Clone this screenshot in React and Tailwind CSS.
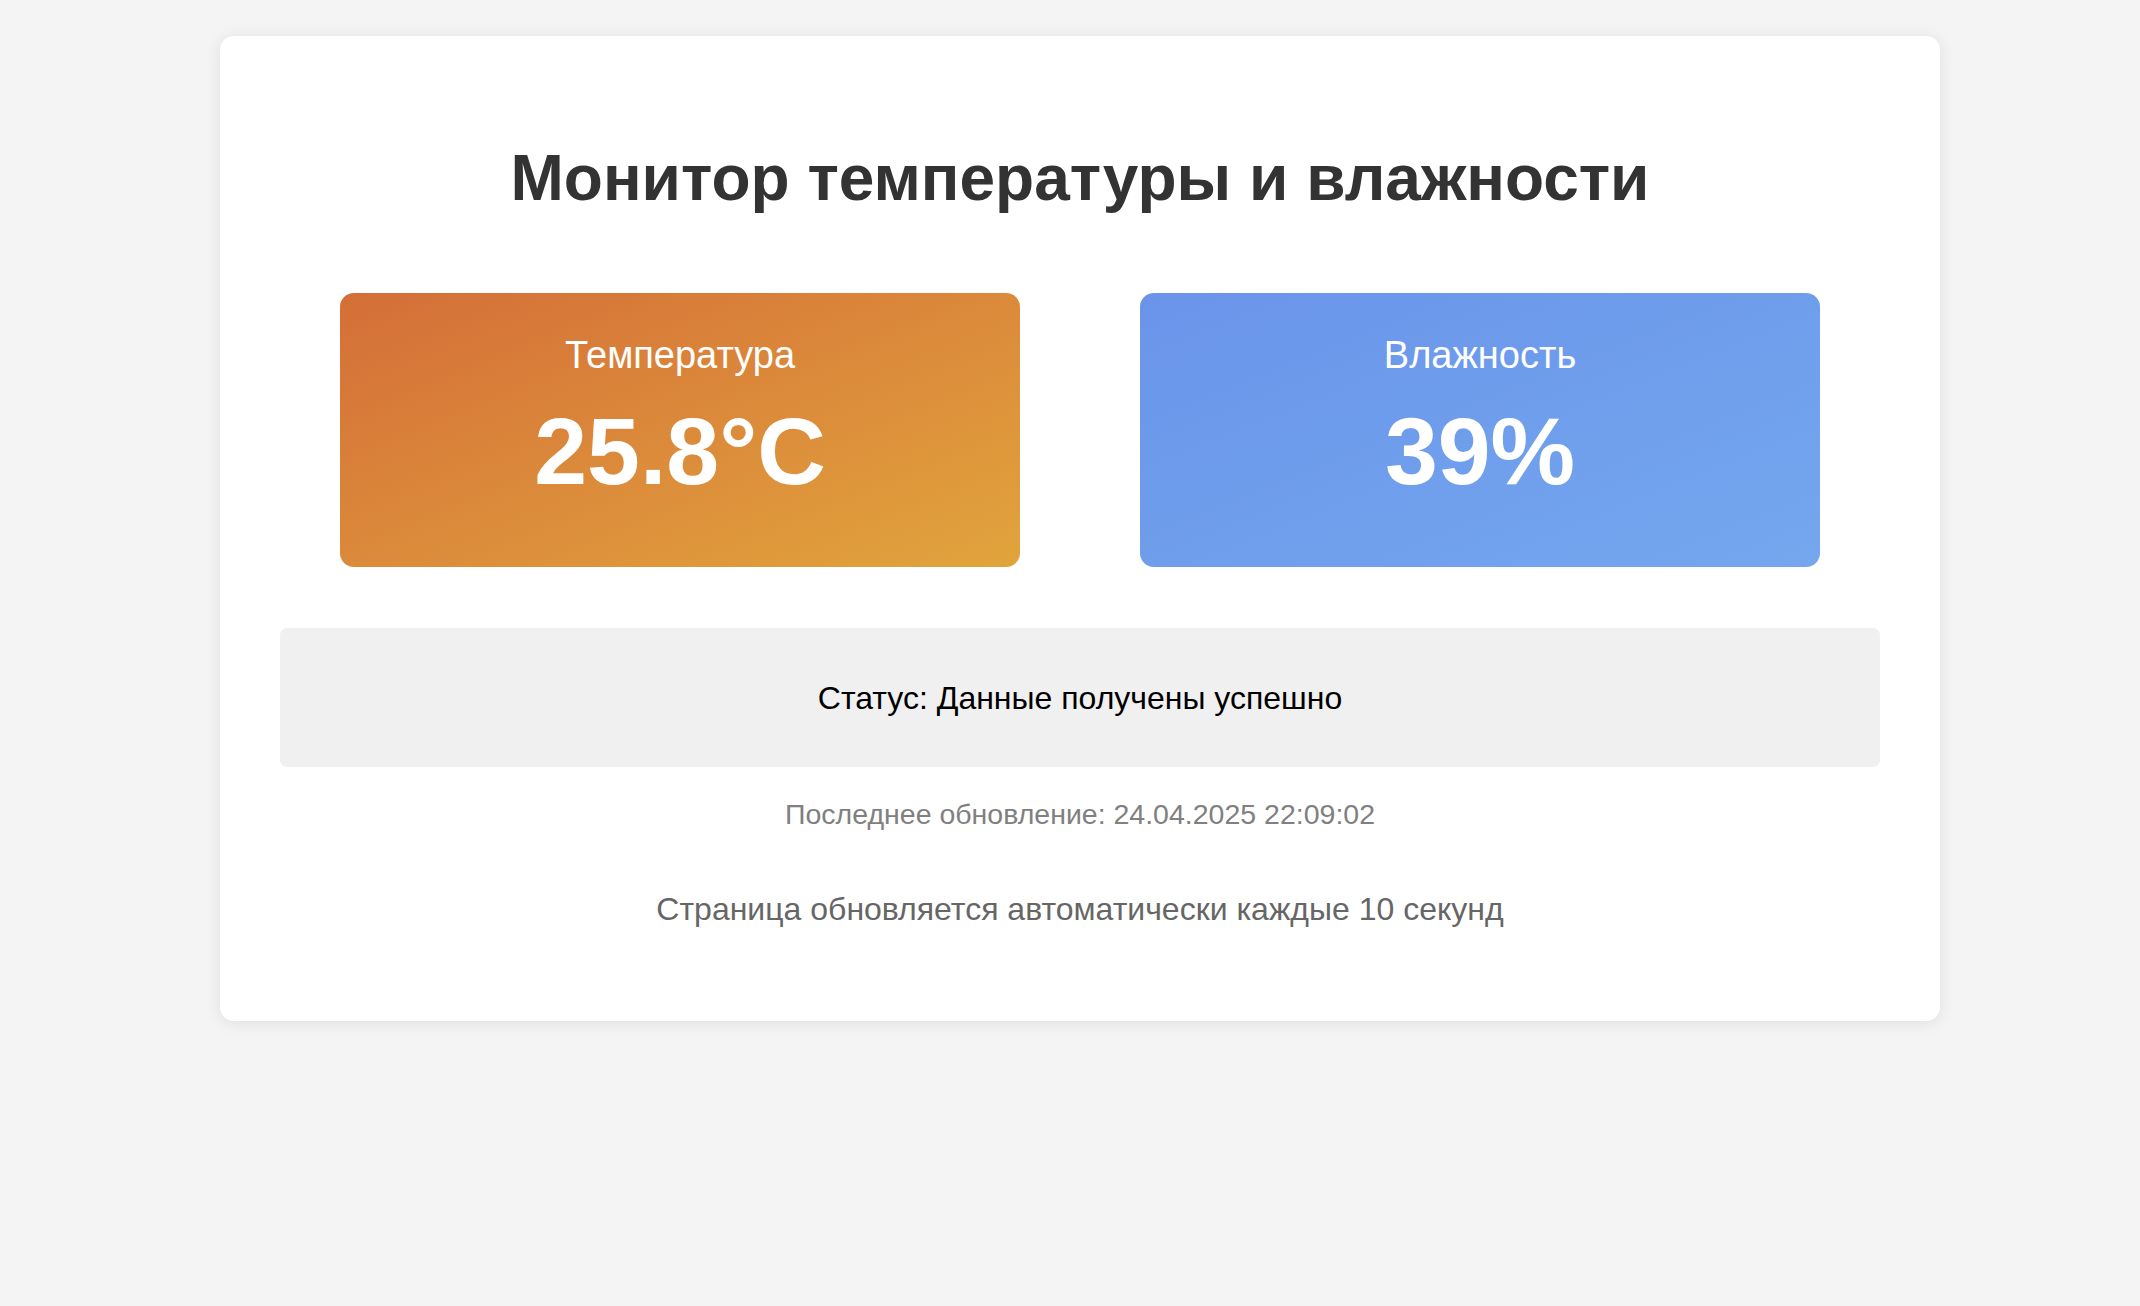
export default function App() {
  return (
    <div className="min-h-[1306px] w-full bg-[#f4f4f4] pt-[36px] font-['Liberation_Sans',Arial,sans-serif]">
      <div className="ml-[220px] w-[1720px] rounded-[14px] bg-white px-[60px] pb-[96px] pt-[110px] shadow-[0_2px_16px_rgba(0,0,0,0.09)]">
        <h1 className="text-center text-[64px] font-bold leading-none text-[#333333]">
          Монитор температуры и влажности
        </h1>

        {/* Readings */}
        <div className="mt-[83px] flex justify-around">
          <div className="flex h-[274px] w-[680px] flex-col items-center rounded-[14px] bg-gradient-to-br from-[#d46e38] to-[#e1a43c] pt-[43px] text-white">
            <p className="text-[38px] leading-none">Температура</p>
            <p className="mt-[30px] text-[95px] font-bold leading-none">25.8°C</p>
          </div>
          <div className="flex h-[274px] w-[680px] flex-col items-center rounded-[14px] bg-gradient-to-br from-[#6a94ea] to-[#74a7ee] pt-[43px] text-white">
            <p className="text-[38px] leading-none">Влажность</p>
            <p className="mt-[30px] text-[95px] font-bold leading-none">39%</p>
          </div>
        </div>

        {/* Status */}
        <div className="mt-[61px] flex h-[139px] items-center justify-center rounded-[7px] bg-[#f0f0f0]">
          <p className="text-[32px] leading-none text-black">Статус: Данные получены успешно</p>
        </div>

        <p className="mt-[33px] text-center text-[28.5px] leading-none text-[#808080]">
          Последнее обновление: 24.04.2025 22:09:02
        </p>
        <p className="mt-[64px] text-center text-[32px] leading-none text-[#666666]">
          Страница обновляется автоматически каждые 10 секунд
        </p>
      </div>
    </div>
  )
}
